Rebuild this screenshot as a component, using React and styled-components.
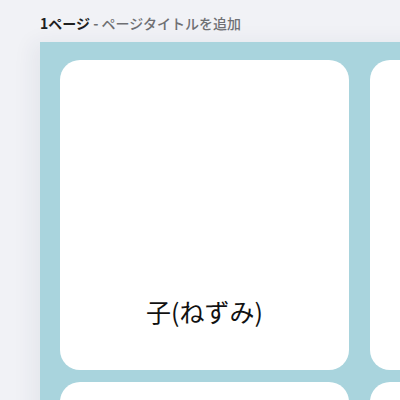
import React from "react";
import styled, { createGlobalStyle } from "styled-components";

const Global = createGlobalStyle`
  html, body { margin: 0; padding: 0; background: #f1f2f6; overflow: hidden; }
  body { font-family: "Noto Sans CJK JP", "Noto Sans", sans-serif; }
`;

const Page = styled.div`
  width: 400px;
  height: 400px;
  overflow: hidden;
  display: flex;
  flex-direction: column;
`;

const Header = styled.div`
  flex-shrink: 0;
  height: 42px;
  padding-left: 40px;
  display: flex;
  align-items: center;
  padding-top: 3px;
  box-sizing: border-box;
  font-size: 14px;
  font-weight: 700;
  color: #1f1f1f;
  white-space: nowrap;
`;

const Muted = styled.span`
  color: #6f7073;
  font-weight: ${(p) => (p.$bold ? 700 : 500)};
`;

const Sheet = styled.div`
  flex-shrink: 0;
  margin-left: 40px;
  width: 600px;
  background: #a9d4dd;
  padding: 18px 20px;
  display: grid;
  grid-template-columns: 289px 289px;
  grid-auto-rows: 310px;
  column-gap: 21px;
  row-gap: 12px;
  box-shadow: -8px 0 20px rgba(40, 50, 80, 0.06);
`;

const Card = styled.div`
  background: #ffffff;
  border-radius: 20px;
  display: flex;
  flex-direction: column;
  justify-content: flex-end;
  align-items: center;
  padding-bottom: 43px;
  box-sizing: border-box;
`;

const Label = styled.div`
  font-size: 25px;
  line-height: 32px;
  color: #111;
`;

export default function App() {
  return (
    <Page>
      <Global />
      <Header>
        1ページ<Muted $bold>&nbsp;- </Muted>
        <Muted>&nbsp;ページタイトルを追加</Muted>
      </Header>
      <Sheet>
        <Card>
          <Label>子(ねずみ)</Label>
        </Card>
        <Card />
        <Card />
        <Card />
      </Sheet>
    </Page>
  );
}
